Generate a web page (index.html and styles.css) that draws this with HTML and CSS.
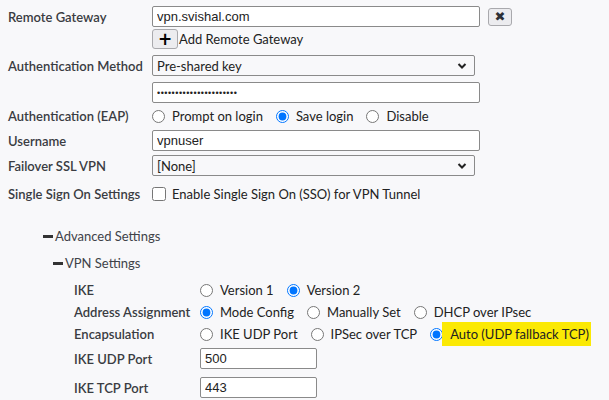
FILE: index.html
```html
<!DOCTYPE html>
<html lang="en">

<head>
    <meta charset="UTF-8">
    <title>IPsec VPN</title>
    <link rel="stylesheet" href="styles.css">
</head>

<body>

    <div class="form">
        <div class="row row-gw">
            <div class="label">Remote Gateway</div>
            <input class="text wide" type="text" value="vpn.svishal.com">
            <button class="btn-del">&#10006;</button>
        </div>
        <div class="row row-add">
            <div class="label"></div>
            <button class="btn-add">+</button>
            <span class="add-text">Add Remote Gateway</span>
        </div>
        <div class="row row-auth">
            <div class="label">Authentication Method</div>
            <div class="select-wrap">
                <select class="select">
                    <option>Pre-shared key</option>
                </select>
                <svg class="chevron" width="10" height="8" viewBox="0 0 10 8"><path d="M1.5 2 L5 5.5 L8.5 2" fill="none" stroke="#222" stroke-width="2"/></svg>
            </div>
        </div>
        <div class="row row-pw">
            <div class="label"></div>
            <input class="text wide pw" type="text" value="&#8226;&#8226;&#8226;&#8226;&#8226;&#8226;&#8226;&#8226;&#8226;&#8226;&#8226;&#8226;&#8226;&#8226;&#8226;&#8226;&#8226;&#8226;&#8226;&#8226;&#8226;&#8226;">
        </div>
        <div class="row row-eap">
            <div class="label">Authentication (EAP)</div>
            <label class="opt"><input type="radio" name="eap">Prompt on login</label>
            <label class="opt"><input type="radio" name="eap" checked>Save login</label>
            <label class="opt"><input type="radio" name="eap">Disable</label>
        </div>
        <div class="row row-user">
            <div class="label">Username</div>
            <input class="text wide" type="text" value="vpnuser">
        </div>
        <div class="row row-fail">
            <div class="label">Failover SSL VPN</div>
            <div class="select-wrap">
                <select class="select">
                    <option>[None]</option>
                </select>
                <svg class="chevron" width="10" height="8" viewBox="0 0 10 8"><path d="M1.5 2 L5 5.5 L8.5 2" fill="none" stroke="#222" stroke-width="2"/></svg>
            </div>
        </div>
        <div class="row row-sso">
            <div class="label">Single Sign On Settings</div>
            <label class="opt"><input type="checkbox">Enable Single Sign On (SSO) for VPN Tunnel</label>
        </div>

        <div class="section section-adv"><span class="dash"></span>Advanced Settings</div>
        <div class="section section-vpn"><span class="dash"></span>VPN Settings</div>

        <div class="sub">
            <div class="row sub-row">
                <div class="label sub-label">IKE</div>
                <label class="opt"><input type="radio" name="ike">Version 1</label>
                <label class="opt"><input type="radio" name="ike" checked>Version 2</label>
            </div>
            <div class="row sub-row">
                <div class="label sub-label">Address Assignment</div>
                <label class="opt"><input type="radio" name="addr" checked>Mode Config</label>
                <label class="opt"><input type="radio" name="addr">Manually Set</label>
                <label class="opt"><input type="radio" name="addr">DHCP over IPsec</label>
            </div>
            <div class="row sub-row">
                <div class="label sub-label">Encapsulation</div>
                <label class="opt"><input type="radio" name="enc">IKE UDP Port</label>
                <label class="opt"><input type="radio" name="enc">IPSec over TCP</label>
                <label class="opt"><input type="radio" name="enc" checked><span class="mark">Auto (UDP fallback TCP)</span></label>
            </div>
            <div class="row port-row">
                <div class="label sub-label">IKE UDP Port</div>
                <input class="text port" type="text" value="500">
            </div>
            <div class="row port-row">
                <div class="label sub-label">IKE TCP Port</div>
                <input class="text port" type="text" value="443">
            </div>
        </div>
    </div>

</body>

</html>
```

FILE: styles.css
```css
* {
    margin: 0;
    padding: 0;
    box-sizing: border-box;
}

body {
    font-family: 'Lato', 'Liberation Sans', sans-serif;
    font-size: 13px;
    color: #34363b;
    background-color: #f8f8fa;
}

.form {
    padding: 6px 8px;
}

.row {
    display: flex;
    align-items: center;
}

.label {
    width: 144px;
    flex: none;
    font-weight: 600;
    color: #3a3c42;
    white-space: nowrap;
}

.text {
    flex: none;
    height: 21px;
    border: 1px solid #8a8a8a;
    border-radius: 2px;
    background: #fff;
    padding: 0 4px;
    font-family: 'Liberation Sans', Arial, sans-serif;
    font-size: 13px;
    color: #222;
}

.wide {
    width: 328px;
}

.pw {
    font-size: 9px;
    letter-spacing: 0.5px;
}

.row-gw {
    height: 21px;
    margin-bottom: 2px;
}

.btn-del {
    flex: none;
    margin-left: 8px;
    width: 24px;
    height: 18px;
    border: 1px solid #a9a9ad;
    border-radius: 3px;
    background: #ececef;
    color: #2c2f36;
    font-family: 'DejaVu Sans', sans-serif;
    font-size: 13px;
    font-weight: bold;
    line-height: 16px;
}

.row-add {
    height: 20px;
    margin-bottom: 6px;
}

.btn-add {
    flex: none;
    width: 26px;
    height: 20px;
    border: 1px solid #a9a9ad;
    border-radius: 3px;
    background: #ececef;
    color: #000;
    font-family: 'DejaVu Sans', sans-serif;
    font-size: 17px;
    font-weight: bold;
    line-height: 16px;
}

.add-text {
    margin-left: 1px;
    color: #222;
    white-space: nowrap;
}

.row-auth {
    margin-bottom: 6px;
}

.select-wrap {
    position: relative;
    flex: none;
    width: 323px;
    height: 21px;
}

.select {
    appearance: none;
    width: 100%;
    height: 100%;
    border: 1px solid #8a8a8a;
    border-radius: 2px;
    background: #f8f8fa;
    padding: 0 4px;
    font-family: 'Lato', sans-serif;
    font-size: 13px;
    color: #222;
}

.chevron {
    position: absolute;
    right: 8px;
    top: 7px;
}

.row-pw {
    margin-bottom: 3px;
}

.row-eap {
    height: 20px;
    margin-bottom: 4px;
}

.opt {
    display: flex;
    align-items: center;
    flex: none;
    white-space: nowrap;
    color: #222;
    margin-right: 13px;
}

.opt input[type="radio"] {
    width: 13px;
    height: 13px;
    margin: 0 7px 0 0;
}

.opt input[type="checkbox"] {
    width: 14px;
    height: 14px;
    margin: 0 6px 0 0;
}

.row-user {
    margin-bottom: 4px;
}

.row-fail {
    margin-bottom: 8px;
}

.row-sso {
    height: 20px;
}

.section {
    display: flex;
    align-items: center;
    height: 20px;
    color: #404248;
}

.dash {
    display: inline-block;
    width: 10px;
    height: 3px;
    background: #333;
    margin-right: 2px;
}

.section-adv {
    margin-top: 22px;
    padding-left: 35px;
}

.section-vpn {
    margin-top: 7px;
    padding-left: 45px;
}

.sub {
    padding-left: 66px;
    margin-top: 6px;
}

.sub-row {
    height: 22px;
}

.sub-label {
    width: 126px;
}

.mark {
    background: #fbe904;
    padding: 4px 2px 4px 8px;
    margin-left: -8px;
}

.port-row {
    margin-top: 3px;
}

.port-row + .port-row {
    margin-top: 8px;
}

.port {
    width: 117px;
}
```
